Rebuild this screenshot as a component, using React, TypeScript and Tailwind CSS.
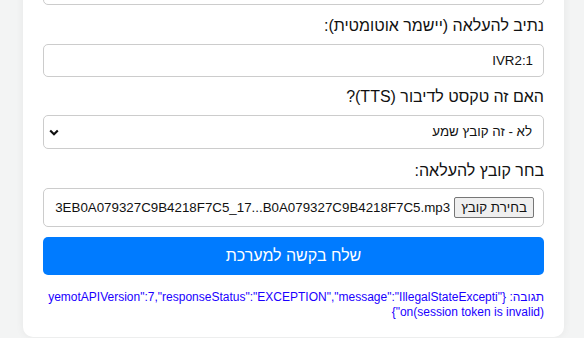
import React from 'react';

const font = { fontFamily: '"Liberation Sans", Arial, sans-serif' };

function Label({ children, className = '' }: { children: React.ReactNode; className?: string }) {
  return <label className={`block text-[16px] leading-[18px] text-[#111] ${className}`}>{children}</label>;
}

export default function App() {
  const response =
    'תגובה: {"yemotAPIVersion":7,"responseStatus":"EXCEPTION","message":"IllegalStateException(session token is invalid)"}';

  return (
    <div dir="rtl" style={font} className="min-h-[338px] w-full overflow-hidden bg-[#f3f4f4]">
      <div className="mr-[20px] -mt-[29px] w-[541px] rounded-[10px] bg-white px-[20px] pb-[17px] shadow-[0_0_8px_rgba(0,0,0,0.06)]">
        <div className="h-[34px] rounded-[5px] border border-[#ccc]" />

        <Label className="mt-[12px]">נתיב להעלאה (יישמר אוטומטית):</Label>
        <div className="mt-[9px] flex h-[33px] items-center rounded-[5px] border border-[#ccc] px-[10px] text-[13.33px] text-[#111]">
          IVR2:1
        </div>

        <Label className="mt-[11px]">האם זה טקסט לדיבור (TTS)?</Label>
        <div className="mt-[9px] flex h-[34px] items-center justify-between rounded-[5px] border border-[#ccc] pr-[11px] pl-[5px] text-[13.33px] text-[#111]">
          <span>לא - זה קובץ שמע</span>
          <svg width="10" height="7" viewBox="0 0 10 7">
            <path d="M1.2 1.5 L5 5.2 L8.8 1.5" fill="none" stroke="#111" strokeWidth="2.2" />
          </svg>
        </div>

        <Label className="mt-[13px]">בחר קובץ להעלאה:</Label>
        <div className="mt-[8px] flex h-[39px] items-center gap-[4px] overflow-hidden rounded-[5px] border border-[#ccc] px-[9px] text-[13.33px] text-[#111]">
          <span className="flex h-[21px] shrink-0 items-center whitespace-nowrap rounded-[2px] border border-[#767676] bg-[#efefef] px-[6px]">
            בחירת קובץ
          </span>
          <span dir="ltr" className="whitespace-nowrap">
            3EB0A079327C9B4218F7C5_17...B0A079327C9B4218F7C5.mp3
          </span>
        </div>

        <button className="mt-[10px] flex h-[38px] w-full items-center justify-center rounded-[5px] bg-[#007bff] text-[16px] text-white">
          שלח בקשה למערכת
        </button>

        <p className="mt-[15px] break-all text-[12px] leading-[15px] text-[#1a00ff]">{response}</p>
      </div>
    </div>
  );
}
